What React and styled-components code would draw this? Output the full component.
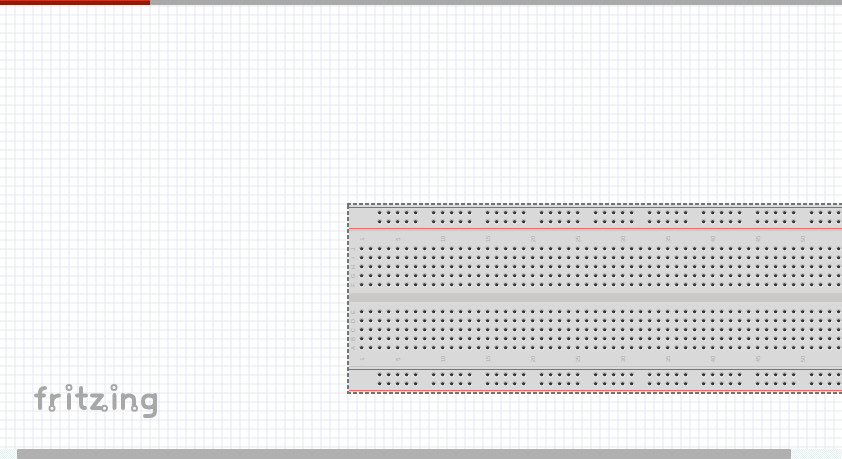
import React from "react";
import styled, { createGlobalStyle } from "styled-components";

const GlobalStyle = createGlobalStyle`
  html, body { margin: 0; overflow: hidden; background: #fff; }
  * { box-sizing: border-box; }
`;

const Window = styled.div`
  display: grid;
  grid-template-rows: 5px 1fr 10px;
  width: 842px;
  height: 459px;
  overflow: hidden;
  background:
    linear-gradient(90deg, rgba(222, 227, 240, 0.42) 2px, transparent 2px) 5px 0 / 9px 9px,
    linear-gradient(rgba(226, 228, 234, 0.4) 2px, transparent 2px) 0 5px / 9px 9px,
    #fff;
`;

const TabStrip = styled.div`
  display: flex;
  background: #a9a9a9;
`;

const ActiveTab = styled.div`
  width: 150px;
  background: #861f09;
  border-top: 1px solid #d5301d;
`;

const Canvas = styled.main`
  position: relative;
  overflow: hidden;
`;

const BoardArt = styled.svg`
  position: absolute;
  left: 347px;
  top: 198px;
  display: block;
`;

const Logo = styled.svg`
  position: absolute;
  left: 33px;
  top: 378px;
`;

const ScrollTrack = styled.div`
  display: flex;
  padding-left: 17px;
  background: repeating-conic-gradient(#e6eef0 0 25%, #fff 0 50%) 0 0 / 2px 2px;
`;

const ScrollThumb = styled.div`
  width: 774px;
  height: 10px;
  background: #b0b0b0;
  border-radius: 1px;
`;

const Label = styled.text`
  font: 6px "Liberation Sans", sans-serif;
  fill: #aeaeae;
  text-anchor: middle;
`;

const columns = Array.from({ length: 54 }, (_, i) => i);
const upperRows = ["J", "I", "H", "G", "F"];
const lowerRows = ["E", "D", "C", "B", "A"];
const numbers = [1, 5, 10, 15, 20, 25, 30, 35, 40, 45, 50];

function TerminalRows({ names, y }) {
  return names.map((name, row) => (
    <g key={name}>
      <Label transform={`translate(8 ${y + row * 9 + 1}) rotate(-90)`}>{name}</Label>
      {columns.map((c) => (
        <use key={c} href="#hole" x={14 + c * 9} y={y + row * 9} />
      ))}
    </g>
  ));
}

function PowerRail({ y }) {
  return [0, 9].map((dy) =>
    columns
      .filter((c) => c >= 2 && (c - 2) % 6 !== 5)
      .map((c) => <use key={`${dy}-${c}`} href="#hole" x={14 + c * 9} y={y + dy} />)
  );
}

function ColumnNumbers({ y }) {
  return numbers.map((n) => (
    <Label key={n} transform={`translate(${14 + (n - 1) * 9 + 3} ${y}) rotate(-90)`}>
      {n}
    </Label>
  ));
}

function Breadboard() {
  return (
    <BoardArt width="495" height="192" viewBox="0 0 495 192">
      <defs>
        <g id="hole">
          <circle cx="0.6" cy="0.6" r="2.5" fill="#bdbdbd" />
          <path d="M-1.9 1A2.5 2.5 0 0 0 3.1 1Z" fill="#e9e9e9" />
          <circle cx="0.6" cy="0.8" r="1.55" fill="#303030" />
        </g>
      </defs>
      <rect x="1" y="1" width="496" height="189" fill="#d9d9d9" />
      <rect x="2" y="4" width="493" height="1" fill="#6767e8" />
      <rect x="2" y="25" width="493" height="1" fill="#f06661" />
      <rect x="2" y="27" width="493" height="1" fill="#c5c5c5" />
      <rect x="2" y="90" width="493" height="9" fill="#cac9c8" />
      <rect x="2" y="163" width="493" height="1" fill="#c5c5c5" />
      <rect x="2" y="166" width="493" height="1" fill="#6767e8" />
      <rect x="2" y="187" width="493" height="1" fill="#f06661" />
      <PowerRail y={9} />
      <ColumnNumbers y={36} />
      <TerminalRows names={upperRows} y={45} />
      <TerminalRows names={lowerRows} y={108} />
      <ColumnNumbers y={156} />
      <PowerRail y={171} />
      <path d="M0 1H495M1 2V190M0 190H495" fill="none" stroke="#f0f0f0" strokeWidth="2" />
      <path d="M0 1H495M1 2V190M0 190H495" fill="none" stroke="#737373" strokeWidth="2" strokeDasharray="4 2" />
    </BoardArt>
  );
}

function FritzingLogo() {
  return (
    <Logo width="127" height="37" viewBox="33 383 127 37" role="img" aria-label="fritzing">
      <g fill="none" stroke="#a8a8a8" strokeWidth="4" strokeLinecap="round" strokeLinejoin="round">
        <path d="M40 408V393Q40 388 45 388M36 395.5H44" />
        <path d="M52 395.5V405M52 401Q54 395.5 59 395.5" />
        <path d="M69 395V408M114.5 395V408" />
        <path d="M81 388V404Q81 408 85 408M77 395.5H86" />
        <path d="M92 395.5H102L92 408H101" />
        <path d="M123 408V395M123 399Q126 395 130 395.5Q134 396 134 400V405" />
        <path d="M155 395V411Q155 416 150 416H145M155 400Q155 395.5 149 395.5Q143 395.5 143 401.5Q143 407.5 149 407.5Q155 407.5 155 402" />
      </g>
      <g fill="#fff" stroke="#a8a8a8" strokeWidth="2">
        <circle cx="52" cy="408.3" r="2.5" />
        <circle cx="69" cy="387.5" r="2.5" />
        <circle cx="104.5" cy="408.3" r="2.5" />
        <circle cx="114" cy="387.5" r="2.5" />
        <circle cx="134.5" cy="408.3" r="2.5" />
      </g>
    </Logo>
  );
}

export default function App() {
  return (
    <>
      <GlobalStyle />
      <Window>
        <TabStrip><ActiveTab /></TabStrip>
        <Canvas>
          <Breadboard />
          <FritzingLogo />
        </Canvas>
        <ScrollTrack><ScrollThumb /></ScrollTrack>
      </Window>
    </>
  );
}
